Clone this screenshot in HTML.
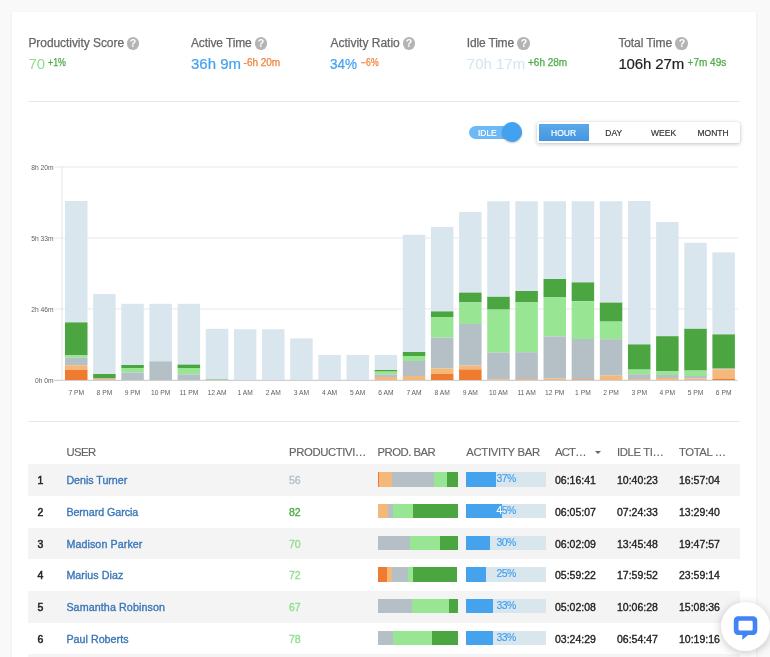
<!DOCTYPE html>
<html lang="en">
<head>
<meta charset="utf-8">
<title>Productivity dashboard</title>
<style>
*{box-sizing:border-box}
html,body{margin:0;padding:0}
body{width:770px;height:657px;overflow:hidden;background:#f9f9f9;font-family:"Liberation Sans",Arial,sans-serif;color:#222;position:relative}
.card{position:absolute;left:12px;top:12px;width:744.2px;will-change:transform;height:700px;background:#fff;border-radius:2px;box-shadow:0 1px 3px rgba(0,0,0,.07),0 0 2px rgba(0,0,0,.04)}
.stat{position:absolute;top:24px;height:50px;white-space:nowrap}
.lbl{position:absolute;left:0;top:0.1px;font-size:12px;line-height:14px;color:#666;-webkit-text-stroke:.25px currentColor}
.help{-webkit-text-stroke:0;position:absolute;top:1px;width:12.6px;height:12.6px;border-radius:50%;background:#b4b4b4;color:#fff;font-size:10.5px;font-weight:bold;line-height:13px;text-align:center}
.val{position:absolute;left:0;top:19px;font-size:15px;line-height:18px}
.val .num,.val sup{display:inline-block;transform-origin:0 50%}
.val sup{position:absolute;top:1.5px;font-size:10px;line-height:12px;vertical-align:baseline;-webkit-text-stroke:.25px currentColor}
.v-lg{color:#90de8e}
.v-b{color:#42a2f2;-webkit-text-stroke:.2px currentColor}
.v-i{color:#d5e4ee}
.v-k{color:#222;-webkit-text-stroke:.2px currentColor}
.d-g{color:#4cac48}
.d-o{color:#f0823e}
.hr{position:absolute;left:16px;width:712px;height:1px;background:#e8e8e8}
.toggle{position:absolute;left:457px;top:114px;width:53px;height:13px;border-radius:7px;background:#6cb9f5;color:#fff;font-size:9.8px;line-height:14px;padding-left:9.3px;-webkit-text-stroke:.2px #fff}
.toggle b{display:inline-block;font-weight:normal;transform:scaleX(.86);transform-origin:0 50%}
.toggle i{position:absolute;left:33.4px;top:-3.7px;width:20px;height:20px;border-radius:50%;background:#42a2f0;box-shadow:0 1px 2px rgba(0,0,0,.25)}
.seg{position:absolute;left:525px;top:110px;width:202.7px;height:21px;background:#fff;border-radius:2px;box-shadow:0 1px 4px rgba(0,0,0,.24),0 0 1px rgba(0,0,0,.12);padding:1.8px 2px;display:flex}
.seg span{width:50px;height:17.4px;line-height:18px;text-align:center;font-size:9.9px;color:#333;-webkit-text-stroke:.2px currentColor}
.seg span b{display:inline-block;font-weight:normal;transform:scaleX(.86)}
.seg span.on{background:linear-gradient(#5aa9ea,#4496e0);color:#fff}
.chart{position:absolute;left:0;top:138px}
.chart text{font-family:"Liberation Sans",Arial,sans-serif;font-size:6.7px;fill:#606060}
.thead,.tr{position:absolute;left:16px;width:712px;display:flex}
.thead{top:432.5px;height:19.8px;font-size:11.3px;color:#646464;line-height:14px;-webkit-text-stroke:.15px currentColor}
.th em{position:absolute;left:566.8px;top:6.1px;width:0;height:0;border-left:3.2px solid transparent;border-right:3.2px solid transparent;border-top:3.4px solid #666}
.tbody{position:absolute;left:0;top:452.3px}
.tr{position:relative;height:31.68px;font-size:10.5px;line-height:32.4px}
.tr.odd{background:#f4f4f4}
.td,.th{flex:none;white-space:nowrap;overflow:hidden}
.c0{width:38.4px;padding-left:9.4px}
.c1{width:222.6px}
.c2{width:88.4px}
.c3{width:88.8px}
.c4{width:88.8px}
.c5{width:62px}
.c6{width:62px}
.c7{width:61px}
.td{-webkit-text-stroke:.35px currentColor}
.td.c0{font-size:10.5px;-webkit-text-stroke:.5px currentColor}
.td a{color:#3c77b8;font-size:10.7px}
.c-gray{color:#b3c0c8}
.c-dg{color:#4cac48}
.c-lg{color:#90de8e}
.pbar{display:flex;width:80px;height:14.4px;margin:7.9px 0 0 .4px;overflow:hidden}
.pbar i{display:block;height:100%;flex:none}
.abar{position:relative;display:block;width:80px;height:14.4px;margin-top:7.9px;background:#dae6ee;color:#3fa0f2;font-size:10.4px;letter-spacing:-.5px;line-height:14.6px;text-align:center;-webkit-text-stroke:.15px currentColor}
.abar b{font-weight:normal;display:block;width:80px;text-align:center}
.abar .fill{position:absolute;left:0;top:0;height:100%;overflow:hidden;background:#45a3ee;color:#fff}
.chat{position:absolute;left:720.5px;top:602px;width:49px;height:49px;border-radius:50%;background:#fff;box-shadow:0 2px 10px rgba(0,0,0,.22)}
.chat svg{position:absolute;left:0;top:0}
</style>
</head>
<body>
<div class="card">
<div class="stat" style="left:16.4px"><div class="lbl" style="letter-spacing:-0.06px">Productivity Score<span class="help" style="left:98.3px">?</span></div><div class="val v-lg" style="letter-spacing:0px"><span class="num">70</span><sup class="d-g" style="left:19.6px;letter-spacing:0px;transform:scaleX(0.887)">+1%</sup></div></div>
<div class="stat" style="left:179.0px"><div class="lbl" style="letter-spacing:-0.13px">Active Time<span class="help" style="left:63.7px">?</span></div><div class="val v-b" style="letter-spacing:0px"><span class="num">36h 9m</span><sup class="d-o" style="left:52.6px;letter-spacing:-0.04px">-6h 20m</sup></div></div>
<div class="stat" style="left:318.4px"><div class="lbl" style="letter-spacing:0px">Activity Ratio<span class="help" style="left:72.3px">?</span></div><div class="val v-b" style="letter-spacing:0px"><span class="num" style="transform:scaleX(0.9)">34%</span><sup class="d-o" style="left:30.6px;letter-spacing:0px;transform:scaleX(0.867)">&minus;6%</sup></div></div>
<div class="stat" style="left:454.8px"><div class="lbl" style="letter-spacing:-0.17px">Idle Time<span class="help" style="left:50.7px">?</span></div><div class="val v-i" style="letter-spacing:0px"><span class="num">70h 17m</span><sup class="d-g" style="left:61.2px;letter-spacing:0px">+6h 28m</sup></div></div>
<div class="stat" style="left:606.4px"><div class="lbl" style="letter-spacing:-0.11px">Total Time<span class="help" style="left:57.1px">?</span></div><div class="val v-k" style="letter-spacing:-0.14px"><span class="num">106h 27m</span><sup class="d-g" style="left:69.2px;letter-spacing:0px">+7m 49s</sup></div></div>
<div class="hr" style="top:88.5px"></div>
<div class="toggle"><b>IDLE</b><i></i></div>
<div class="seg"><span class="on"><b>HOUR</b></span><span><b>DAY</b></span><span><b>WEEK</b></span><span><b>MONTH</b></span></div>
<svg class="chart" width="744" height="260" viewBox="12 150 744 260">
<g stroke="#e7e7e7" stroke-width="1.1" fill="none">
<line x1="54" y1="167.05" x2="737.6" y2="167.05"/>
<line x1="54" y1="238.05" x2="737.6" y2="238.05"/>
<line x1="54" y1="309.05" x2="737.6" y2="309.05"/>
<line x1="54" y1="380.35" x2="737.6" y2="380.35" stroke="#cfcfcf"/>
<line x1="61.9" y1="166.5" x2="61.9" y2="380.9"/>
</g>
<g class="ylab" text-anchor="end">
<text x="53.6" y="169.5">8h 20m</text>
<text x="53.6" y="240.5">5h 33m</text>
<text x="53.6" y="311.5">2h 46m</text>
<text x="53.6" y="383.3">0h 0m</text>
</g>
<g class="bars">
<rect x="65.00" y="201.0" width="22.5" height="121.40" fill="#dae6ee"/>
<rect x="65.00" y="322.4" width="22.5" height="33.00" fill="#4ba641"/>
<rect x="65.00" y="355.4" width="22.5" height="2.40" fill="#98e593"/>
<rect x="65.00" y="357.8" width="22.5" height="7.40" fill="#b4bfc6"/>
<rect x="65.00" y="365.2" width="22.5" height="4.80" fill="#f5b87b"/>
<rect x="65.00" y="370.0" width="22.5" height="10.00" fill="#ee7b30"/>
<rect x="93.15" y="294.0" width="22.5" height="80.00" fill="#dae6ee"/>
<rect x="93.15" y="374.0" width="22.5" height="4.00" fill="#4ba641"/>
<rect x="93.15" y="378.0" width="22.5" height="1.00" fill="#b4bfc6"/>
<rect x="93.15" y="379.0" width="22.5" height="1.00" fill="#f5b87b"/>
<rect x="121.30" y="303.8" width="22.5" height="61.20" fill="#dae6ee"/>
<rect x="121.30" y="365.0" width="22.5" height="3.00" fill="#4ba641"/>
<rect x="121.30" y="368.0" width="22.5" height="4.60" fill="#98e593"/>
<rect x="121.30" y="372.6" width="22.5" height="7.40" fill="#b4bfc6"/>
<rect x="149.44" y="303.8" width="22.5" height="57.20" fill="#dae6ee"/>
<rect x="149.44" y="361.0" width="22.5" height="0.50" fill="#98e593"/>
<rect x="149.44" y="361.5" width="22.5" height="18.50" fill="#b4bfc6"/>
<rect x="177.59" y="303.8" width="22.5" height="60.80" fill="#dae6ee"/>
<rect x="177.59" y="364.6" width="22.5" height="3.40" fill="#4ba641"/>
<rect x="177.59" y="368.0" width="22.5" height="6.40" fill="#98e593"/>
<rect x="177.59" y="374.4" width="22.5" height="5.60" fill="#b4bfc6"/>
<rect x="205.74" y="328.8" width="22.5" height="50.80" fill="#dae6ee"/>
<rect x="205.74" y="379.6" width="22.5" height="0.40" fill="#4ba641"/>
<rect x="233.89" y="329.2" width="22.5" height="50.80" fill="#dae6ee"/>
<rect x="262.04" y="329.2" width="22.5" height="50.80" fill="#dae6ee"/>
<rect x="290.18" y="338.4" width="22.5" height="41.60" fill="#dae6ee"/>
<rect x="318.33" y="355.0" width="22.5" height="25.00" fill="#dae6ee"/>
<rect x="346.48" y="355.0" width="22.5" height="25.00" fill="#dae6ee"/>
<rect x="374.63" y="355.0" width="22.5" height="15.00" fill="#dae6ee"/>
<rect x="374.63" y="370.0" width="22.5" height="1.60" fill="#4ba641"/>
<rect x="374.63" y="371.6" width="22.5" height="2.80" fill="#98e593"/>
<rect x="374.63" y="374.4" width="22.5" height="2.60" fill="#b4bfc6"/>
<rect x="374.63" y="377.0" width="22.5" height="3.00" fill="#f5b87b"/>
<rect x="402.78" y="234.8" width="22.5" height="117.20" fill="#dae6ee"/>
<rect x="402.78" y="352.0" width="22.5" height="4.00" fill="#4ba641"/>
<rect x="402.78" y="356.0" width="22.5" height="5.00" fill="#98e593"/>
<rect x="402.78" y="361.0" width="22.5" height="15.00" fill="#b4bfc6"/>
<rect x="402.78" y="376.0" width="22.5" height="4.00" fill="#f5b87b"/>
<rect x="430.92" y="227.0" width="22.5" height="84.40" fill="#dae6ee"/>
<rect x="430.92" y="311.4" width="22.5" height="5.60" fill="#4ba641"/>
<rect x="430.92" y="317.0" width="22.5" height="20.60" fill="#98e593"/>
<rect x="430.92" y="337.6" width="22.5" height="30.80" fill="#b4bfc6"/>
<rect x="430.92" y="368.4" width="22.5" height="5.60" fill="#f5b87b"/>
<rect x="430.92" y="374.0" width="22.5" height="6.00" fill="#ee7b30"/>
<rect x="459.07" y="212.0" width="22.5" height="80.60" fill="#dae6ee"/>
<rect x="459.07" y="292.6" width="22.5" height="9.80" fill="#4ba641"/>
<rect x="459.07" y="302.4" width="22.5" height="21.60" fill="#98e593"/>
<rect x="459.07" y="324.0" width="22.5" height="41.60" fill="#b4bfc6"/>
<rect x="459.07" y="365.6" width="22.5" height="3.80" fill="#f5b87b"/>
<rect x="459.07" y="369.4" width="22.5" height="10.60" fill="#ee7b30"/>
<rect x="487.22" y="201.2" width="22.5" height="95.60" fill="#dae6ee"/>
<rect x="487.22" y="296.8" width="22.5" height="12.80" fill="#4ba641"/>
<rect x="487.22" y="309.6" width="22.5" height="43.00" fill="#98e593"/>
<rect x="487.22" y="352.6" width="22.5" height="26.60" fill="#b4bfc6"/>
<rect x="487.22" y="379.2" width="22.5" height="0.80" fill="#f5b87b"/>
<rect x="515.37" y="201.2" width="22.5" height="89.80" fill="#dae6ee"/>
<rect x="515.37" y="291.0" width="22.5" height="11.00" fill="#4ba641"/>
<rect x="515.37" y="302.0" width="22.5" height="50.20" fill="#98e593"/>
<rect x="515.37" y="352.2" width="22.5" height="26.80" fill="#b4bfc6"/>
<rect x="515.37" y="379.0" width="22.5" height="0.70" fill="#f5b87b"/>
<rect x="515.37" y="379.7" width="22.5" height="0.30" fill="#ee7b30"/>
<rect x="543.52" y="201.2" width="22.5" height="77.80" fill="#dae6ee"/>
<rect x="543.52" y="279.0" width="22.5" height="18.00" fill="#4ba641"/>
<rect x="543.52" y="297.0" width="22.5" height="39.40" fill="#98e593"/>
<rect x="543.52" y="336.4" width="22.5" height="42.20" fill="#b4bfc6"/>
<rect x="543.52" y="378.6" width="22.5" height="1.40" fill="#f5b87b"/>
<rect x="571.66" y="201.2" width="22.5" height="81.20" fill="#dae6ee"/>
<rect x="571.66" y="282.4" width="22.5" height="18.80" fill="#4ba641"/>
<rect x="571.66" y="301.2" width="22.5" height="37.80" fill="#98e593"/>
<rect x="571.66" y="339.0" width="22.5" height="40.00" fill="#b4bfc6"/>
<rect x="571.66" y="379.0" width="22.5" height="0.50" fill="#f5b87b"/>
<rect x="571.66" y="379.5" width="22.5" height="0.50" fill="#ee7b30"/>
<rect x="599.81" y="201.2" width="22.5" height="101.40" fill="#dae6ee"/>
<rect x="599.81" y="302.6" width="22.5" height="19.00" fill="#4ba641"/>
<rect x="599.81" y="321.6" width="22.5" height="17.60" fill="#98e593"/>
<rect x="599.81" y="339.2" width="22.5" height="36.40" fill="#b4bfc6"/>
<rect x="599.81" y="375.6" width="22.5" height="4.40" fill="#f5b87b"/>
<rect x="627.96" y="201.0" width="22.5" height="143.40" fill="#dae6ee"/>
<rect x="627.96" y="344.4" width="22.5" height="25.20" fill="#4ba641"/>
<rect x="627.96" y="369.6" width="22.5" height="4.60" fill="#98e593"/>
<rect x="627.96" y="374.2" width="22.5" height="4.80" fill="#b4bfc6"/>
<rect x="627.96" y="379.0" width="22.5" height="1.00" fill="#f5b87b"/>
<rect x="656.11" y="222.0" width="22.5" height="114.20" fill="#dae6ee"/>
<rect x="656.11" y="336.2" width="22.5" height="35.20" fill="#4ba641"/>
<rect x="656.11" y="371.4" width="22.5" height="3.60" fill="#98e593"/>
<rect x="656.11" y="375.0" width="22.5" height="3.00" fill="#b4bfc6"/>
<rect x="656.11" y="378.0" width="22.5" height="2.00" fill="#f5b87b"/>
<rect x="684.26" y="242.8" width="22.5" height="86.00" fill="#dae6ee"/>
<rect x="684.26" y="328.8" width="22.5" height="41.80" fill="#4ba641"/>
<rect x="684.26" y="370.6" width="22.5" height="5.40" fill="#98e593"/>
<rect x="684.26" y="376.0" width="22.5" height="2.60" fill="#b4bfc6"/>
<rect x="684.26" y="378.6" width="22.5" height="1.40" fill="#f5b87b"/>
<rect x="712.40" y="252.4" width="22.5" height="82.00" fill="#dae6ee"/>
<rect x="712.40" y="334.4" width="22.5" height="34.20" fill="#4ba641"/>
<rect x="712.40" y="368.6" width="22.5" height="0.70" fill="#b4bfc6"/>
<rect x="712.40" y="369.3" width="22.5" height="9.70" fill="#f5b87b"/>
<rect x="712.40" y="379.0" width="22.5" height="1.00" fill="#ee7b30"/>
</g>
<g class="xlab" text-anchor="middle">
<text x="76.25" y="395.2">7 PM</text>
<text x="104.40" y="395.2">8 PM</text>
<text x="132.55" y="395.2">9 PM</text>
<text x="160.69" y="395.2">10 PM</text>
<text x="188.84" y="395.2">11 PM</text>
<text x="216.99" y="395.2">12 AM</text>
<text x="245.14" y="395.2">1 AM</text>
<text x="273.29" y="395.2">2 AM</text>
<text x="301.43" y="395.2">3 AM</text>
<text x="329.58" y="395.2">4 AM</text>
<text x="357.73" y="395.2">5 AM</text>
<text x="385.88" y="395.2">6 AM</text>
<text x="414.03" y="395.2">7 AM</text>
<text x="442.17" y="395.2">8 AM</text>
<text x="470.32" y="395.2">9 AM</text>
<text x="498.47" y="395.2">10 AM</text>
<text x="526.62" y="395.2">11 AM</text>
<text x="554.77" y="395.2">12 PM</text>
<text x="582.91" y="395.2">1 PM</text>
<text x="611.06" y="395.2">2 PM</text>
<text x="639.21" y="395.2">3 PM</text>
<text x="667.36" y="395.2">4 PM</text>
<text x="695.51" y="395.2">5 PM</text>
<text x="723.65" y="395.2">6 PM</text>
</g>
</svg>
<div class="hr" style="top:408.5px"></div>
<div class="thead"><div class="th c0"></div><div class="th c1"><span style="letter-spacing:-.55px">USER</span></div><div class="th c2"><span style="letter-spacing:-.36px">PRODUCTIVI…</span></div><div class="th c3"><span style="letter-spacing:-.47px">PROD. BAR</span></div><div class="th c4"><span style="letter-spacing:-.27px">ACTIVITY BAR</span></div><div class="th c5"><span style="letter-spacing:-.8px">ACT…</span><em></em></div><div class="th c6"><span style="letter-spacing:-.35px">IDLE TI…</span></div><div class="th c7"><span style="letter-spacing:-.4px">TOTAL …</span></div></div>
<div class="tbody">
<div class="tr odd"><div class="td c0">1</div><div class="td c1"><a style="letter-spacing:-0.03px">Denis Turner</a></div><div class="td c2 c-gray">56</div><div class="td c3"><span class="pbar"><i style="width:1.2px;background:#ee7b30"></i><i style="width:13.0px;background:#f5b87b"></i><i style="width:41.8px;background:#b4bfc6"></i><i style="width:13.0px;background:#98e593"></i><i style="width:11.5px;background:#4ba641"></i></span></div><div class="td c4"><span class="abar"><b>37%</b><span class="fill" style="width:29.6px"><b>37%</b></span></span></div><div class="td c5">06:16:41</div><div class="td c6">10:40:23</div><div class="td c7">16:57:04</div></div>
<div class="tr"><div class="td c0">2</div><div class="td c1"><a style="letter-spacing:-0.05px">Bernard Garcia</a></div><div class="td c2 c-dg">82</div><div class="td c3"><span class="pbar"><i style="width:9.8px;background:#f5b87b"></i><i style="width:5.2px;background:#b4bfc6"></i><i style="width:19.8px;background:#98e593"></i><i style="width:45.7px;background:#4ba641"></i></span></div><div class="td c4"><span class="abar"><b>45%</b><span class="fill" style="width:36.0px"><b>45%</b></span></span></div><div class="td c5">06:05:07</div><div class="td c6">07:24:33</div><div class="td c7">13:29:40</div></div>
<div class="tr odd"><div class="td c0">3</div><div class="td c1"><a style="letter-spacing:0.09px">Madison Parker</a></div><div class="td c2 c-lg">70</div><div class="td c3"><span class="pbar"><i style="width:32.0px;background:#b4bfc6"></i><i style="width:30.4px;background:#98e593"></i><i style="width:18.1px;background:#4ba641"></i></span></div><div class="td c4"><span class="abar"><b>30%</b><span class="fill" style="width:24.0px"><b>30%</b></span></span></div><div class="td c5">06:02:09</div><div class="td c6">13:45:48</div><div class="td c7">19:47:57</div></div>
<div class="tr"><div class="td c0">4</div><div class="td c1"><a style="letter-spacing:0.05px">Marius Diaz</a></div><div class="td c2 c-lg">72</div><div class="td c3"><span class="pbar"><i style="width:9.6px;background:#ee7b30"></i><i style="width:4.6px;background:#f5b87b"></i><i style="width:16.2px;background:#b4bfc6"></i><i style="width:4.4px;background:#98e593"></i><i style="width:44.8px;background:#4ba641"></i></span></div><div class="td c4"><span class="abar"><b>25%</b><span class="fill" style="width:20.0px"><b>25%</b></span></span></div><div class="td c5">05:59:22</div><div class="td c6">17:59:52</div><div class="td c7">23:59:14</div></div>
<div class="tr odd"><div class="td c0">5</div><div class="td c1"><a style="letter-spacing:0.105px">Samantha Robinson</a></div><div class="td c2 c-lg">67</div><div class="td c3"><span class="pbar"><i style="width:34.6px;background:#b4bfc6"></i><i style="width:36.6px;background:#98e593"></i><i style="width:9.3px;background:#4ba641"></i></span></div><div class="td c4"><span class="abar"><b>33%</b><span class="fill" style="width:26.4px"><b>33%</b></span></span></div><div class="td c5">05:02:08</div><div class="td c6">10:06:28</div><div class="td c7">15:08:36</div></div>
<div class="tr"><div class="td c0">6</div><div class="td c1"><a style="letter-spacing:0.03px">Paul Roberts</a></div><div class="td c2 c-lg">78</div><div class="td c3"><span class="pbar"><i style="width:15.0px;background:#b4bfc6"></i><i style="width:38.8px;background:#98e593"></i><i style="width:26.7px;background:#4ba641"></i></span></div><div class="td c4"><span class="abar"><b>33%</b><span class="fill" style="width:26.4px"><b>33%</b></span></span></div><div class="td c5">03:24:29</div><div class="td c6">06:54:47</div><div class="td c7">10:19:16</div></div>
<div class="tr odd"></div>
</div>
</div>
<div class="chat"><svg width="49" height="49" viewBox="720.5 602 49 49"><path fill="#4384f5" fill-rule="evenodd" d="M737.5 616.3H752.5999999999999A4.2 4.2 0 0 1 756.8 620.5V630.8A4.2 4.2 0 0 1 752.5999999999999 635.0H737.5A4.2 4.2 0 0 1 733.3 630.8V620.5A4.2 4.2 0 0 1 737.5 616.3ZM739.4 620.7H750.8000000000001A1.4 1.4 0 0 1 752.2 622.1V629.2A1.4 1.4 0 0 1 750.8000000000001 630.6H739.4A1.4 1.4 0 0 1 738.0 629.2V622.1A1.4 1.4 0 0 1 739.4 620.7Z"/><path d="M741.8 634v5q0 .9.7.3l6.9-5.9z" fill="#4384f5"/></svg></div>
</body>
</html>
